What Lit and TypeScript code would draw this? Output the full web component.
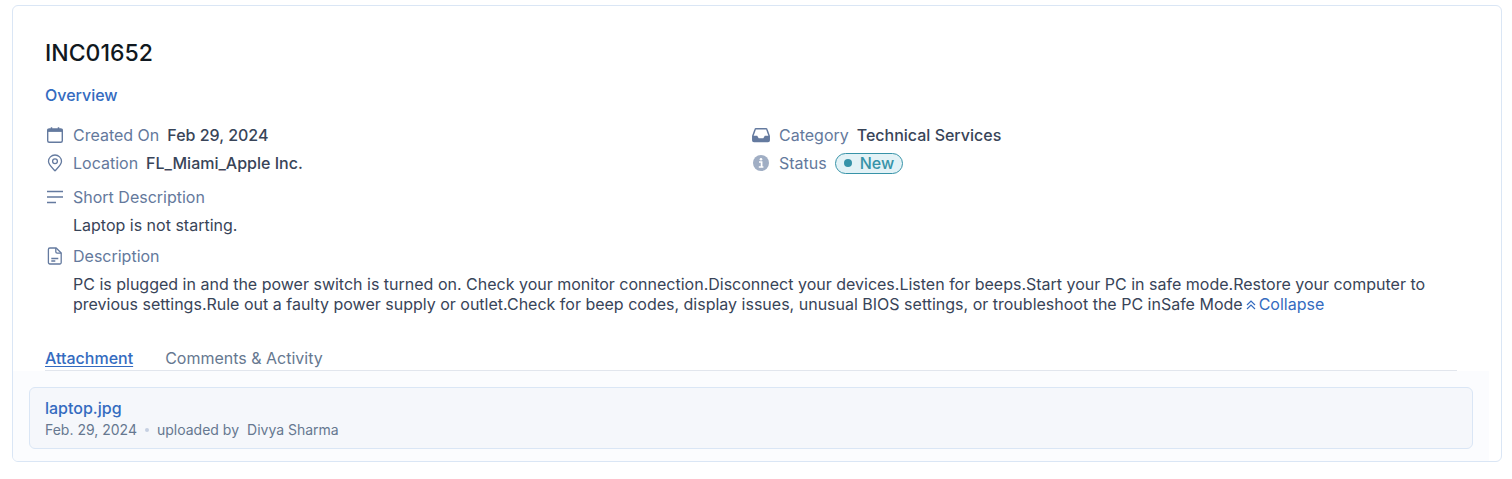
import { LitElement, html, css, svg } from "lit";
import { customElement, state } from "lit/decorators.js";

const icons = {
  calendar: svg`<path d="M5.500 1.200v3M12.500 1.200v3" stroke="currentColor" stroke-width="1.500"/><rect x="1.700" y="3" width="14.600" height="13.300" rx="1.500" fill="none" stroke="currentColor" stroke-width="1.400"/><path d="M1.500 3h15v2.900h-15z" fill="currentColor"/>`,
  pin: svg`<path d="M9 16.800C6 13.600 2.500 10.700 2.500 7.300a6.500 6.300 0 0 1 13 0c0 3.400-3.500 6.300-6.500 9.500z" fill="none" stroke="currentColor" stroke-width="1.300" stroke-linejoin="round"/><circle cx="9" cy="7.300" r="2.400" fill="none" stroke="currentColor" stroke-width="1.300"/>`,
  lines: svg`<path d="M1 3.500h16M1 9h16M1 14.500h9" stroke="currentColor" stroke-width="1.500"/>`,
  file: svg`<path d="M3.800 1h6.400l5 5v9.600a1.400 1.400 0 0 1-1.400 1.400h-10a1.400 1.400 0 0 1-1.400-1.400V2.400A1.400 1.400 0 0 1 3.800 1z" fill="none" stroke="currentColor" stroke-width="1.300" stroke-linejoin="round"/><path d="M9.800 1v3.800a1.400 1.400 0 0 0 1.400 1.400h4M5.300 11.500h7M5.300 14h4" fill="none" stroke="currentColor" stroke-width="1.300"/>`,
  inbox: svg`<path d="M4.100 2.700h9.800a1 1 0 0 1 1 .7L17.200 10v4.300a1.200 1.200 0 0 1-1.200 1.200H2a1.200 1.200 0 0 1-1.200-1.200V10l2.300-6.600a1 1 0 0 1 1-.7z" fill="none" stroke="currentColor" stroke-width="1.500" stroke-linejoin="round"/><path d="M.800 9.800h4.400l1.500 2.400h4.600l1.500-2.400h4.400V15a.9.9 0 0 1-.9.900H1.700a.9.9 0 0 1-.9-.9z" fill="currentColor"/>`,
  info: svg`<circle cx="9" cy="9" r="8" fill="#a0aec4"/><circle cx="9" cy="5.200" r="1.300" fill="#fff"/><path d="M7 8h2.600v5M6.800 13h4.600" fill="none" stroke="#fff" stroke-width="1.700"/>`,
};

const icon = (name: keyof typeof icons) =>
  html`<svg class="icon" viewBox="0 0 18 18" aria-hidden="true">${icons[name]}</svg>`;

@customElement("app-root")
export class AppRoot extends LitElement {
  @state() private tab = "attachment";
  @state() private expanded = true;

  static styles = css`
    :host {
      display: block;
      padding: 5px 10px 17px 12px;
      background: #fff;
      color: #384458;
      font: 400 16px/20px Inter, sans-serif;
    }
    * {
      box-sizing: border-box;
    }
    h1, h2, p, dl, dd {
      margin: 0;
    }
    button {
      padding: 0;
      border: 0;
      background: none;
      font: inherit;
      color: inherit;
      cursor: pointer;
    }
    .card {
      border: 1px solid #dae6f5;
      border-radius: 6px;
      padding-right: 12px;
    }
    .body {
      padding: 29px 32px 0;
    }
    h1 {
      color: #101820;
      font-size: 23px;
      line-height: 36px;
      font-weight: 500;
    }
    h2 {
      margin-top: 14px;
      color: #346bc0;
      font-size: 16px;
      line-height: 20px;
      font-weight: 500;
    }
    .facts {
      display: grid;
      grid-template-columns: 1fr 1fr;
      gap: 8px 0;
      margin: 20px 0 14px;
    }
    .row {
      display: flex;
      align-items: center;
      height: 20px;
    }
    .icon {
      flex: none;
      width: 18px;
      height: 18px;
      margin: 0 9px 0 1px;
      color: #647a9f;
    }
    dt {
      color: #64799c;
    }
    .value {
      margin-left: 8px;
      font-weight: 500;
    }
    .badge {
      display: flex;
      align-items: center;
      gap: 8px;
      height: 21px;
      margin-left: 8px;
      padding: 0 8px;
      border: 1px solid #3793a8;
      border-radius: 11px;
      background: #e3f2f6;
      color: #3793a8;
      font-weight: 500;
    }
    .badge::before {
      content: "";
      width: 8px;
      height: 8px;
      border-radius: 50%;
      background: currentColor;
    }
    .block + .block {
      margin-top: 11px;
    }
    .text {
      margin: 8px 0 0 28px;
    }
    .collapse {
      color: #346bc0;
    }
    .chevrons {
      width: 10px;
      height: 10px;
      margin: 0 3px;
    }
    .tabs {
      display: flex;
      gap: 32px;
      margin-top: 34px;
      padding-bottom: 2px;
      border-bottom: 1px solid #e2e6ed;
      color: #667890;
    }
    .tabs .active {
      color: #346bc0;
      font-weight: 500;
      text-decoration: underline;
      text-underline-offset: 2px;
    }
    .panel {
      padding: 16px 16px 12px;
      border-radius: 0 0 0 5px;
      background: #fbfcfe;
    }
    .file {
      padding: 8px 15px;
      border: 1px solid #dae6f5;
      border-radius: 6px;
      background: #f5f7fb;
    }
    .file a {
      display: inline-block;
      color: #346bc0;
      font-weight: 500;
      line-height: 24px;
      text-decoration: none;
      vertical-align: top;
    }
    .meta {
      display: flex;
      align-items: center;
      gap: 8px;
      color: #667890;
      font-size: 14px;
    }
    .dot {
      width: 4px;
      height: 4px;
      border-radius: 50%;
      background: #c6d0e2;
    }
  `;

  private renderTab(id: string, label: string) {
    const on = this.tab === id;
    return html`<button role="tab" aria-selected=${on} class=${on ? "active" : ""}
      @click=${() => (this.tab = id)}>${label}</button>`;
  }

  render() {
    return html`
      <article class="card">
        <div class="body">
          <h1>INC01652</h1>
          <h2>Overview</h2>
          <dl class="facts">
            <div class="row">${icon("calendar")}<dt>Created On</dt><dd class="value">Feb 29, 2024</dd></div>
            <div class="row">${icon("inbox")}<dt>Category</dt><dd class="value">Technical Services</dd></div>
            <div class="row">${icon("pin")}<dt>Location</dt><dd class="value">FL_Miami_Apple Inc.</dd></div>
            <div class="row">${icon("info")}<dt>Status</dt><dd class="badge">New</dd></div>
          </dl>
          <dl class="block">
            <div class="row">${icon("lines")}<dt>Short Description</dt></div>
            <dd class="text">Laptop is not starting.</dd>
          </dl>
          <dl class="block">
            <div class="row">${icon("file")}<dt>Description</dt></div>
            <dd class="text">PC is plugged in and the power switch is turned on. Check your monitor connection.Disconnect your devices.Listen for beeps.Start your PC in safe mode.Restore your computer to ${this.expanded
              ? "previous settings.Rule out a faulty power supply or outlet.Check for beep codes, display issues, unusual BIOS settings, or troubleshoot the PC inSafe Mode"
              : ""}<button class="collapse" @click=${() => (this.expanded = !this.expanded)}><svg class="chevrons" viewBox="0 0 10 10" aria-hidden="true"><path d="M1 5l4-4 4 4M1 9l4-4 4 4" fill="none" stroke="currentColor" stroke-width="1.200"/></svg>${this.expanded ? "Collapse" : "Expand"}</button></dd>
          </dl>
          <div class="tabs" role="tablist">
            ${this.renderTab("attachment", "Attachment")}
            ${this.renderTab("comments", "Comments & Activity")}
          </div>
        </div>
        <section class="panel" role="tabpanel">
          ${this.tab === "attachment"
            ? html`<div class="file">
                <a href="#laptop.jpg">laptop.jpg</a>
                <div class="meta"><span>Feb. 29, 2024</span><span class="dot"></span><span>uploaded by</span><span>Divya Sharma</span></div>
              </div>`
            : ""}
        </section>
      </article>
    `;
  }
}
